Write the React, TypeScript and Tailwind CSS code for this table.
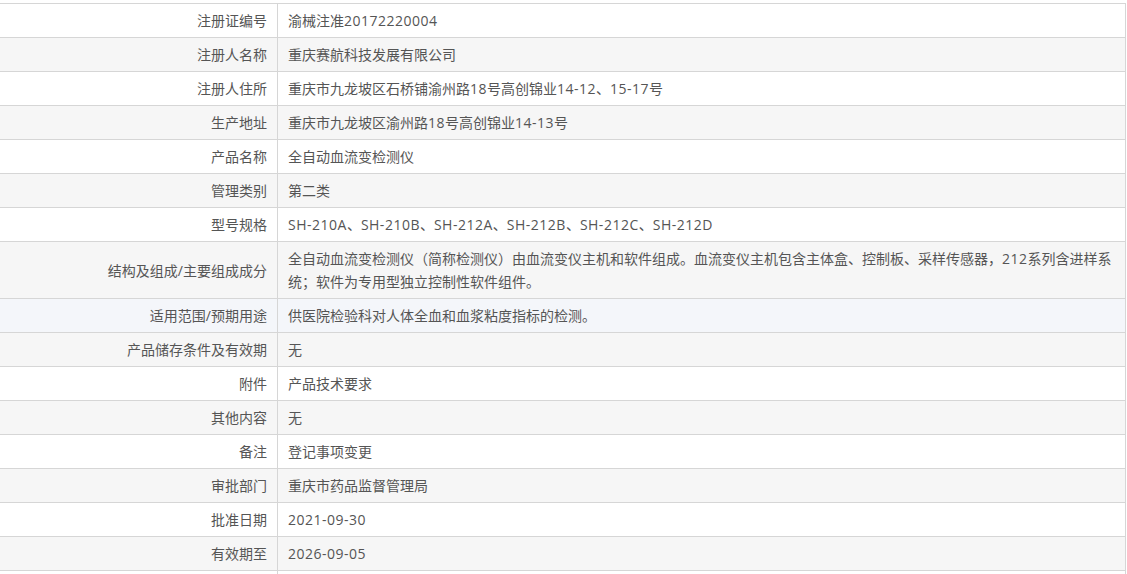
import React from "react";

const rows: { label: string; value: string; bg: string }[] = [
  { label: "注册证编号", value: "渝械注准20172220004", bg: "bg-white" },
  { label: "注册人名称", value: "重庆赛航科技发展有限公司", bg: "bg-[#f6f6f6]" },
  { label: "注册人住所", value: "重庆市九龙坡区石桥铺渝州路18号高创锦业14-12、15-17号", bg: "bg-white" },
  { label: "生产地址", value: "重庆市九龙坡区渝州路18号高创锦业14-13号", bg: "bg-[#f6f6f6]" },
  { label: "产品名称", value: "全自动血流变检测仪", bg: "bg-white" },
  { label: "管理类别", value: "第二类", bg: "bg-[#f6f6f6]" },
  { label: "型号规格", value: "SH-210A、SH-210B、SH-212A、SH-212B、SH-212C、SH-212D", bg: "bg-white" },
  {
    label: "结构及组成/主要组成成分",
    value:
      "全自动血流变检测仪（简称检测仪）由血流变仪主机和软件组成。血流变仪主机包含主体盒、控制板、采样传感器，212系列含进样系统；软件为专用型独立控制性软件组件。",
    bg: "bg-[#f6f6f6]",
  },
  { label: "适用范围/预期用途", value: "供医院检验科对人体全血和血浆粘度指标的检测。", bg: "bg-[#f4f6fa]" },
  { label: "产品储存条件及有效期", value: "无", bg: "bg-[#f6f6f6]" },
  { label: "附件", value: "产品技术要求", bg: "bg-white" },
  { label: "其他内容", value: "无", bg: "bg-[#f6f6f6]" },
  { label: "备注", value: "登记事项变更", bg: "bg-white" },
  { label: "审批部门", value: "重庆市药品监督管理局", bg: "bg-[#f6f6f6]" },
  { label: "批准日期", value: "2021-09-30", bg: "bg-white" },
  { label: "有效期至", value: "2026-09-05", bg: "bg-[#f6f6f6]" },
  { label: "", value: "", bg: "bg-white" },
];

function Mixed({ text }: { text: string }) {
  const parts = text.split(/([A-Za-z0-9\-\/\.]+)/);
  return (
    <>
      {parts.map((p, i) =>
        /^[A-Za-z0-9\-\/\.]+$/.test(p) ? (
          <span key={i} className="tracking-[0.5px]">
            {p}
          </span>
        ) : (
          <React.Fragment key={i}>{p}</React.Fragment>
        )
      )}
    </>
  );
}

export default function App() {
  return (
    <div
      className="w-[1127px] h-[574px] overflow-hidden bg-white pt-[3px] text-[14px] leading-[23px] text-[#555]"
      style={{ fontFamily: '"Open Sans", "Noto Sans CJK SC", sans-serif' }}
    >
      <div className="w-[1126px] border-t border-r border-[#d6d6d6]">
        {rows.map((r, i) => (
          <div key={i} className={`flex border-b border-[#d6d6d6] ${r.bg}`}>
            <div className="w-[278px] shrink-0 border-r border-[#d6d6d6] px-[10px] py-[5px] flex items-center justify-end text-right">
              {r.label}
            </div>
            <div className="flex-1 px-[10px] py-[5px]">
              <Mixed text={r.value} />
            </div>
          </div>
        ))}
      </div>
    </div>
  );
}
